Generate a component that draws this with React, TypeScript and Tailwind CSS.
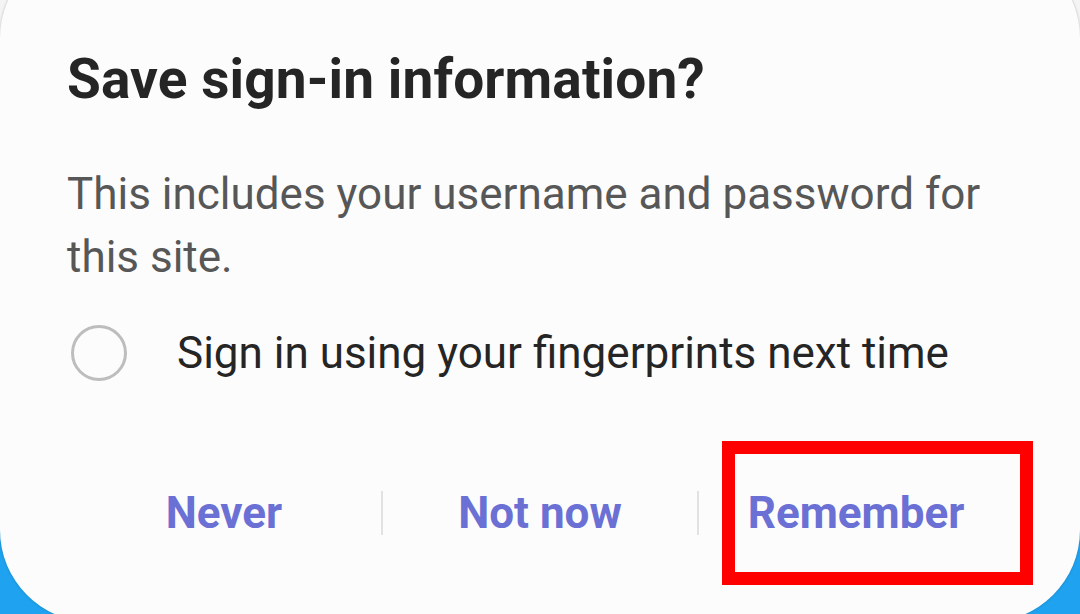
const font = { fontFamily: "Roboto, 'Noto Sans', sans-serif" };

export default function App() {
  return (
    <div className="h-[614px] w-[1080px] overflow-hidden bg-[linear-gradient(#f4f4f4_0%,#f4f4f4_80%,#1fa3f0_80%)]" style={font}>
      {/* Dialog */}
      <div className="relative mt-[-54px] h-[676px] rounded-[92px] bg-[#fcfcfc] pt-[101px] shadow-[0_0_3px_rgba(0,0,0,0.22)]">
        <h1 className="pl-[67px] text-[55px] font-bold leading-[64px] tracking-[0.1px] text-[#252525]">
          Save sign-in information?
        </h1>

        <p className="mt-[52px] pl-[67px] pr-[60px] text-[44px] leading-[63px] text-[#575757]">
          This includes your username and password for this site.
        </p>

        <div className="mt-[34px] flex items-center pl-[71px]">
          <span className="h-[56px] w-[56px] shrink-0 rounded-full border-[3px] border-[#bdbdbd]" />
          <span className="ml-[50px] text-[44px] leading-[60px] text-[#252525]">
            Sign in using your fingerprints next time
          </span>
        </div>

        {/* Buttons */}
        <div className="mt-[100px] ml-[67px] flex w-[946px] items-center">
          <button className="flex-1 text-[44px] font-bold leading-[60px] text-[#6b70d4]">Never</button>
          <span className="h-[44px] w-[2px] bg-[#e2e2e2]" />
          <button className="flex-1 text-[44px] font-bold leading-[60px] text-[#6b70d4]">Not now</button>
          <span className="h-[44px] w-[2px] bg-[#e2e2e2]" />
          <button className="flex-1 text-[44px] font-bold leading-[60px] text-[#6b70d4]">Remember</button>
        </div>

        {/* Annotation */}
        <div className="absolute left-[722px] top-[495px] h-[144px] w-[311px] border-[13px] border-[#ff0000]" />
      </div>
    </div>
  );
}
